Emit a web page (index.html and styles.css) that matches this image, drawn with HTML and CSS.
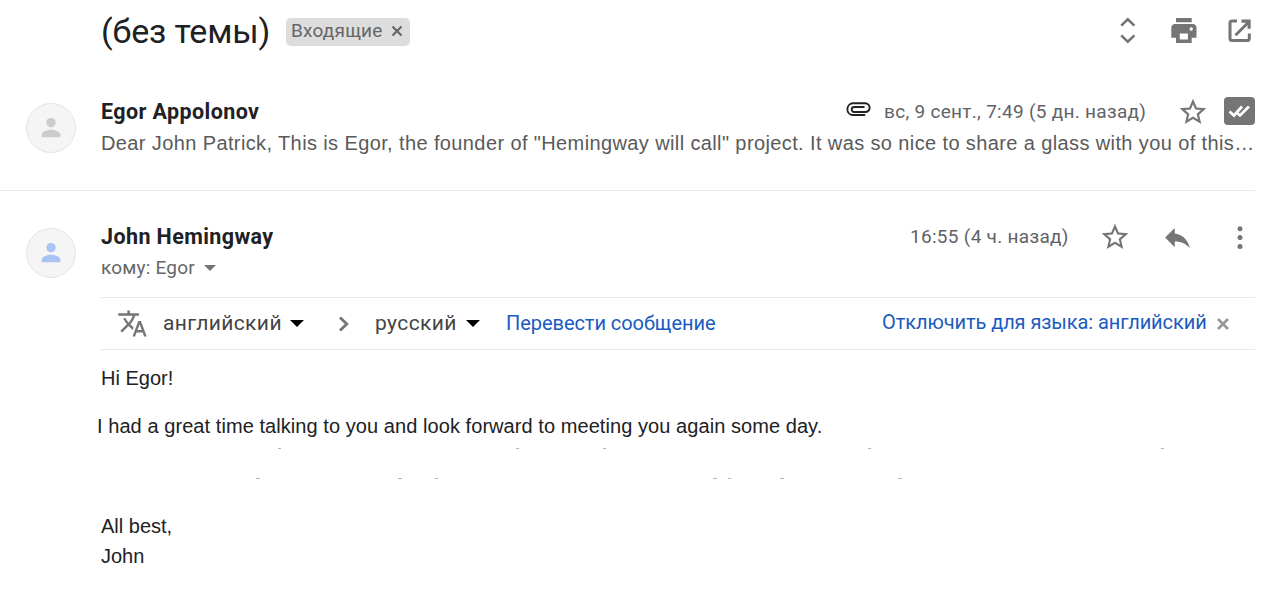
FILE: index.html
```html
<!doctype html>
<html lang="ru">

<head>
  <title>(без темы)</title>
  <meta charset="utf-8" />
  <link rel="stylesheet" href="styles.css">
</head>

<body>
  <header class="thread-header">
    <h1>(без темы)</h1>
    <span class="chip"><span class="chip-text">Входящие</span>
      <svg class="chip-close" viewBox="0 0 12 12"><path d="M1.5 1.5l9 9M10.5 1.5l-9 9" /></svg>
    </span>
    <div class="tools">
      <svg class="tool" viewBox="0 0 32 32"><path class="line" d="M9.2 10.6l6.600-6.200 6.600 6.200M9.200 20.400l6.600 6.200 6.600-6.200" /></svg>
      <svg class="tool" viewBox="0 0 32 32"><path fill-rule="evenodd" d="M8 3h15.700v4.200H8zM7 9h17.500a4 4 0 0 1 4 4v9.700h-4.800v5.300H8v-5.300H3.300V13A4 4 0 0 1 7 9zM11.800 18.500v6h8.100v-6zM23.200 12.300a1.700 1.700 0 1 0 .01 0z" /></svg>
      <svg class="tool" viewBox="0 0 32 32"><path class="line thick" d="M13 6H8a2 2 0 0 0-2 2V23.500a2 2 0 0 0 2 2h15.300a2 2 0 0 0 2-2v-5M11.500 20.200L25 6.700" /><path d="M17.500 4.500h9.200v9.200h-3.200V7.700h-6z" /></svg>
    </div>
  </header>

  <section class="message first">
    <div class="avatar">
      <svg viewBox="0 0 24 24"><circle cx="12" cy="7" r="4.300" /><path d="M3.400 20.500v-2.400c0-3 5.500-4.600 8.600-4.600s8.600 1.600 8.600 4.600v2.400z" /></svg>
    </div>
    <div class="content">
      <div class="row">
        <strong class="name">Egor Appolonov</strong>
        <svg class="clip" viewBox="0 0 26 15"><path d="M19.500 13H7.500a5.900 5.900 0 0 1 0-11.700h12.800a4.200 4.200 0 0 1 0 8.700H9.200a2.500 2.500 0 0 1 0-5h9.600" /></svg>
        <span class="date long">вс, 9 сент., 7:49 (5 дн. назад)</span>
        <svg class="star" viewBox="0 0 24 24"><path d="M22 9.240l-7.190-.62L12 2 9.190 8.630 2 9.240l5.460 4.730L5.820 21 12 17.270 18.180 21l-1.630-7.030L22 9.240zM12 15.400l-3.760 2.270 1-4.280-3.320-2.880 4.380-.38L12 6.100l1.710 4.040 4.380.38-3.320 2.880 1 4.280L12 15.400z" /></svg>
        <span class="badge"><svg viewBox="0 0 31 28"><path d="M5.500 14.500l4.500 4L18 9.500M12.500 15.500l3.500 3 9-9" /></svg></span>
      </div>
      <p class="snippet">Dear John Patrick, This is Egor, the founder of "Hemingway will call" project. It was so nice to share a glass with you of this…</p>
    </div>
  </section>

  <section class="message">
    <div class="avatar blue">
      <svg viewBox="0 0 24 24"><circle cx="12" cy="7" r="4.300" /><path d="M3.400 20.500v-2.400c0-3 5.500-4.600 8.600-4.600s8.600 1.600 8.600 4.600v2.400z" /></svg>
    </div>
    <div class="content">
      <div class="row">
        <strong class="name">John Hemingway</strong>
        <span class="date short">16:55 (4 ч. назад)</span>
        <svg class="star" viewBox="0 0 24 24"><path d="M22 9.240l-7.190-.62L12 2 9.190 8.630 2 9.240l5.460 4.730L5.820 21 12 17.270 18.180 21l-1.630-7.030L22 9.240zM12 15.400l-3.760 2.270 1-4.280-3.320-2.880 4.380-.38L12 6.100l1.710 4.040 4.380.38-3.320 2.880 1 4.280L12 15.400z" /></svg>
        <svg class="reply" viewBox="0 0 24 24"><path d="M10 9V5l-7 7 7 7v-4.100c5 0 8.500 1.600 11 5.100-1-5-4-10-11-11z" /></svg>
        <svg class="more" viewBox="0 0 8 26"><circle cx="4" cy="4.700" r="2.500" /><circle cx="4" cy="13.600" r="2.500" /><circle cx="4" cy="22.500" r="2.500" /></svg>
      </div>
      <p class="to"><span>кому: Egor</span><i class="caret"></i></p>

      <div class="translate">
        <svg class="lang-icon" viewBox="0 0 24 24"><path d="M12.870 15.070l-2.540-2.510.03-.03c1.740-1.940 2.980-4.170 3.710-6.530H17V4h-7V2H8v2H1v1.990h11.170C11.500 7.920 10.440 9.750 9 11.350 8.070 10.320 7.300 9.190 6.690 8h-2c.73 1.630 1.730 3.170 2.980 4.560l-5.090 5.020L4 19l5-5 3.110 3.110.76-2.040zM18.500 10h-2L12 22h2l1.120-3h4.750L21 22h2l-4.500-12zm-2.620 7l1.620-4.330L19.120 17h-3.240z" /></svg>
        <span class="lang from">английский</span><i class="caret dark"></i>
        <svg class="chevron" viewBox="0 0 12 16"><path d="M2 1.500L8.800 8 2 14.500" /></svg>
        <span class="lang into">русский</span><i class="caret dark"></i>
        <a class="do">Перевести сообщение</a>
        <a class="off">Отключить для языка: английский</a>
        <svg class="close" viewBox="0 0 12 12"><path d="M1 1l10 10M11 1L1 11" /></svg>
      </div>

      <div class="text">
        <p class="hi">Hi Egor!</p>
        <p class="great">I had a great time talking to you and look forward to meeting you again some day.</p>
        <!-- what is left of the erased lines -->
        <svg class="erased" viewBox="0 0 1154 71"><path d="M177 7.500h3M415 7.500h3M502 7.500h3M767 7.500h3M1060 7.500h3M155 37.500h4M297 37.500h4M334 37.500h3M612 37.500h4M627 37.500h3M679 37.500h4M797 37.500h4" /></svg>
        <p class="bye">All best,<br />John</p>
      </div>
    </div>
  </section>
</body>

</html>
```
FILE: styles.css
```css
body {
  margin: 0;
  width: 1255px;
  background-color: #fff;
  font-family: Roboto, sans-serif;
  color: #202124;
}

p, h1 {
  margin: 0;
}

svg {
  flex: none;
  fill: #757575;
}

.thread-header {
  display: flex;
  align-items: center;
  height: 62px;
  padding-left: 101px;
}

h1 {
  width: 185px;
  font-size: 34px;
  font-weight: 400;
  letter-spacing: -0.15px;
  white-space: nowrap;
}

.chip {
  display: flex;
  align-items: center;
  box-sizing: border-box;
  width: 124px;
  height: 28px;
  margin-top: 2px;
  padding: 0 7px 0 5px;
  border-radius: 5px;
  background-color: #ddd;
  color: #666;
  font-size: 19px;
  letter-spacing: 0.2px;
}

.chip-text {
  width: 100px;
  margin-top: -3px;
}

.chip-close {
  width: 12px;
  height: 12px;
  margin-top: -2px;
  fill: none;
  stroke: #666;
  stroke-width: 2.2;
}

.tools {
  display: flex;
  gap: 24px;
  margin-left: auto;
  margin-right: -1px;
}

.tool {
  width: 32px;
  height: 32px;
}

.line {
  fill: none;
  stroke: #757575;
  stroke-width: 2.6;
}

.thick {
  stroke-width: 3;
}

.message {
  display: flex;
  padding-top: 32px;
}

.first {
  height: 92px;
  padding-top: 36px;
  border-bottom: 1px solid #e8e8e8;
}

.avatar {
  display: flex;
  align-items: center;
  justify-content: center;
  box-sizing: border-box;
  flex: none;
  width: 50px;
  height: 50px;
  margin: 5px 25px 0 26px;
  border: 1px solid #e4e4e4;
  border-radius: 50%;
  background-color: #f5f5f5;
}

.avatar svg {
  width: 26px;
  height: 26px;
  fill: #ccc;
}

.blue svg {
  fill: #a8c3f4;
}

.content {
  flex: none;
  width: 1154px;
}

.row {
  display: flex;
  align-items: center;
  height: 28px;
}

.name {
  margin: -1px auto 0 0;
  font-size: 21.5px;
  letter-spacing: 0.4px;
}

.clip {
  width: 26px;
  height: 15px;
  margin: -6px 13px 0 0;
  fill: none;
  stroke: #222;
  stroke-width: 1.9;
  stroke-linecap: round;
}

.date {
  margin-top: -2px;
  color: #5f6368;
  font-size: 19px;
  letter-spacing: 0.3px;
  white-space: nowrap;
}

.long {
  width: 262px;
  margin-right: 31px;
}

.short {
  width: 158px;
  margin-right: 31px;
}

.star {
  width: 32px;
  height: 32px;
}

.badge {
  width: 31px;
  height: 28px;
  margin: -2px 0 0 15px;
  border-radius: 4px;
  background-color: #757575;
}

.badge svg {
  display: block;
  fill: none;
  stroke: #fff;
  stroke-width: 2.7;
}

.snippet {
  color: #5a5a5a;
  font: 20px/34px "Liberation Sans", sans-serif;
  letter-spacing: 0.385px;
  white-space: nowrap;
}

.reply {
  width: 33px;
  height: 33px;
  margin: 0 42px 0 30px;
}

.more {
  width: 8px;
  height: 26px;
  margin-right: 11px;
}

.to {
  display: flex;
  align-items: center;
  height: 34px;
  color: #666;
  font-size: 19px;
  letter-spacing: 0.2px;
}

.to span {
  width: 103px;
  margin-top: -1px;
}

.caret {
  border: 6px solid transparent;
  border-top-color: #757575;
  border-bottom: 0;
}

.dark {
  border-width: 7px 7px 0;
  border-top-color: #000;
}

.translate {
  display: flex;
  align-items: center;
  height: 51px;
  margin-top: 12px;
  border-top: 1px solid #e8e8e8;
  border-bottom: 1px solid #e8e8e8;
  font-size: 20px;
}

.lang-icon {
  width: 31px;
  height: 31px;
  margin: 0 15px 0 16px;
}

.lang {
  margin-top: -2px;
  color: #444;
  font-size: 21px;
  letter-spacing: 0.4px;
}

.from {
  width: 127px;
}

.chevron {
  width: 12px;
  height: 16px;
  margin: 0 25px 0 34px;
  fill: none;
  stroke: #757575;
  stroke-width: 2.8;
}

.into {
  width: 91px;
}

.translate a {
  color: #1a5bc0;
  white-space: nowrap;
}

.translate .do {
  width: 209px;
  margin: -2px 0 0 26px;
  letter-spacing: -0.05px;
}

.translate .off {
  width: 325px;
  margin: -4px 10px 0 auto;
  letter-spacing: -0.08px;
}

.close {
  width: 12px;
  height: 12px;
  margin-right: 26px;
  fill: none;
  stroke: #999;
  stroke-width: 2.8;
}

.text {
  padding-top: 13px;
  font: 20px/30px "Liberation Sans", sans-serif;
}

.great {
  margin: 18px 0 0 -4px;
  letter-spacing: 0.065px;
  white-space: nowrap;
}

.erased {
  display: block;
  width: 1154px;
  height: 71px;
  fill: none;
  stroke: #b5b5b5;
  stroke-width: 1;
}

.bye {
  margin-top: -1px;
}
```
